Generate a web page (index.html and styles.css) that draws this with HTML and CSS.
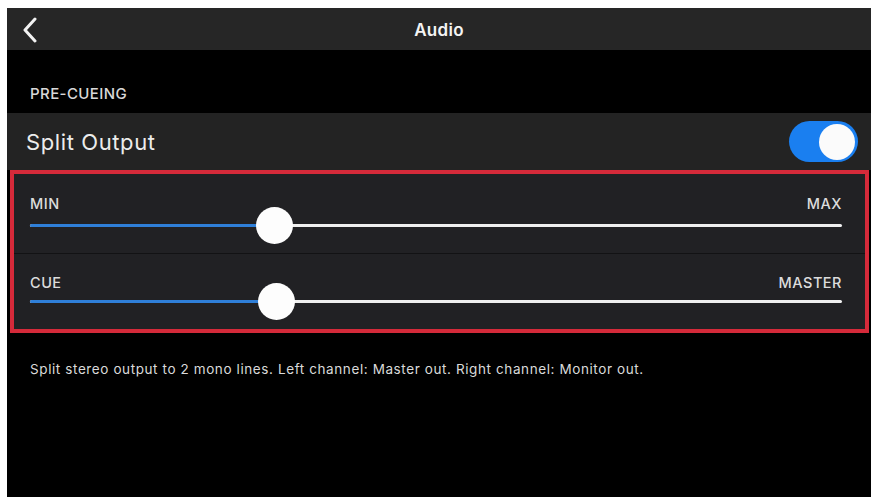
FILE: index.html
```html
<!DOCTYPE html>
<html lang="en">
  <head>
    <meta charset="UTF-8" />
    <meta name="viewport" content="width=device-width, initial-scale=1.0" />
    <title>Audio</title>
    <link rel="stylesheet" href="styles.css">
  </head>

  <body>
    <div class="screen">
      <!-- 顶部导航 -->
      <div class="header">
        <button class="back">
          <svg width="16" height="26" viewBox="0 0 16 26">
            <path d="M13 2 L3 13 L13 24" fill="none" stroke="#f2f2f2" stroke-width="3" stroke-linecap="round" stroke-linejoin="round" />
          </svg>
        </button>
        <span class="title">Audio</span>
      </div>

      <div class="sectionTitle">PRE-CUEING</div>

      <div class="toggleRow">
        <span class="toggleLabel">Split Output</span>
        <div class="toggle on">
          <div class="toggleKnob"></div>
        </div>
      </div>

      <!-- 滑块区域 -->
      <div class="sliderPanel">
        <div class="sliderRow first">
          <div class="sliderLabels">
            <span>MIN</span>
            <span>MAX</span>
          </div>
          <div class="track">
            <div class="fill" style="width: 30%"></div>
            <div class="knob" style="left: 30%"></div>
          </div>
        </div>
        <div class="sliderRow second">
          <div class="sliderLabels">
            <span>CUE</span>
            <span>MASTER</span>
          </div>
          <div class="track">
            <div class="fill" style="width: 30.3%"></div>
            <div class="knob" style="left: 30.3%"></div>
          </div>
        </div>
      </div>

      <p class="note">Split stereo output to 2 mono lines. Left channel: Master out. Right channel: Monitor out.</p>
    </div>
  </body>
</html>
```

FILE: styles.css
```css
body {
  margin: 0;
  padding: 8px 5px 3px 7px;
  background: #fff;
  font-family: Inter, "Liberation Sans", sans-serif;
}

.screen {
  height: 489px;
  background: #000;
  color: #e8e8e8;
  display: flex;
  flex-direction: column;
}

.header {
  height: 42px;
  background: #262626;
  display: flex;
  align-items: center;
  position: relative;
}

button {
  background: transparent;
  outline: none;
  border: none;
  padding: 0;
}

.back {
  width: 16px;
  height: 26px;
  margin-left: 15px;
  margin-top: 2px;
}

.title {
  position: absolute;
  left: 0;
  right: 0;
  top: 12px;
  text-align: center;
  font-size: 17px;
  font-weight: 600;
  letter-spacing: 0.3px;
  color: #f4f4f4;
  pointer-events: none;
}

.sectionTitle {
  height: 63px;
  box-sizing: border-box;
  padding: 34px 0 0 23px;
  font-size: 15px;
  font-weight: 500;
  letter-spacing: 0.4px;
  color: #d8d8d8;
}

.toggleRow {
  height: 57px;
  background: #232323;
  display: flex;
  align-items: center;
  justify-content: space-between;
  padding: 0 13px 0 19px;
}

.toggleLabel {
  font-size: 22px;
  letter-spacing: 0.6px;
  color: #ececec;
}

.toggle {
  width: 69px;
  height: 41px;
  border-radius: 21px;
  background: #1a7ff0;
  display: flex;
  align-items: center;
  justify-content: flex-end;
  padding: 0 3px;
  box-sizing: border-box;
}

.toggleKnob {
  width: 36px;
  height: 36px;
  border-radius: 50%;
  background: #fbfbfb;
}

.sliderPanel {
  margin: 0 2px 0 3px;
  border: 4px solid #d52a3a;
  background: #212124;
}

.sliderRow {
  padding: 0 23px 0 16px;
}

.sliderRow.first {
  height: 79px;
  border-bottom: 1px solid #121214;
}

.sliderRow.second {
  height: 75px;
}

.sliderLabels {
  display: flex;
  justify-content: space-between;
  font-size: 14.5px;
  font-weight: 500;
  letter-spacing: 0.5px;
  color: #dcdcdc;
  padding-top: 21px;
}

.sliderRow.second .sliderLabels {
  padding-top: 20px;
}

.track {
  position: relative;
  height: 3px;
  background: #f0f0f0;
  border-radius: 2px;
  margin-top: 12px;
}

.sliderRow.second .track {
  margin-top: 9px;
}

.fill {
  height: 3px;
  background: #2f7fd8;
  border-radius: 2px;
}

.knob {
  position: absolute;
  top: -17px;
  width: 37px;
  height: 37px;
  margin-left: -18px;
  border-radius: 50%;
  background: #fdfdfd;
}

.note {
  margin: 28px 0 0 23px;
  font-size: 13.5px;
  letter-spacing: 0.6px;
  color: #dadada;
}
```
